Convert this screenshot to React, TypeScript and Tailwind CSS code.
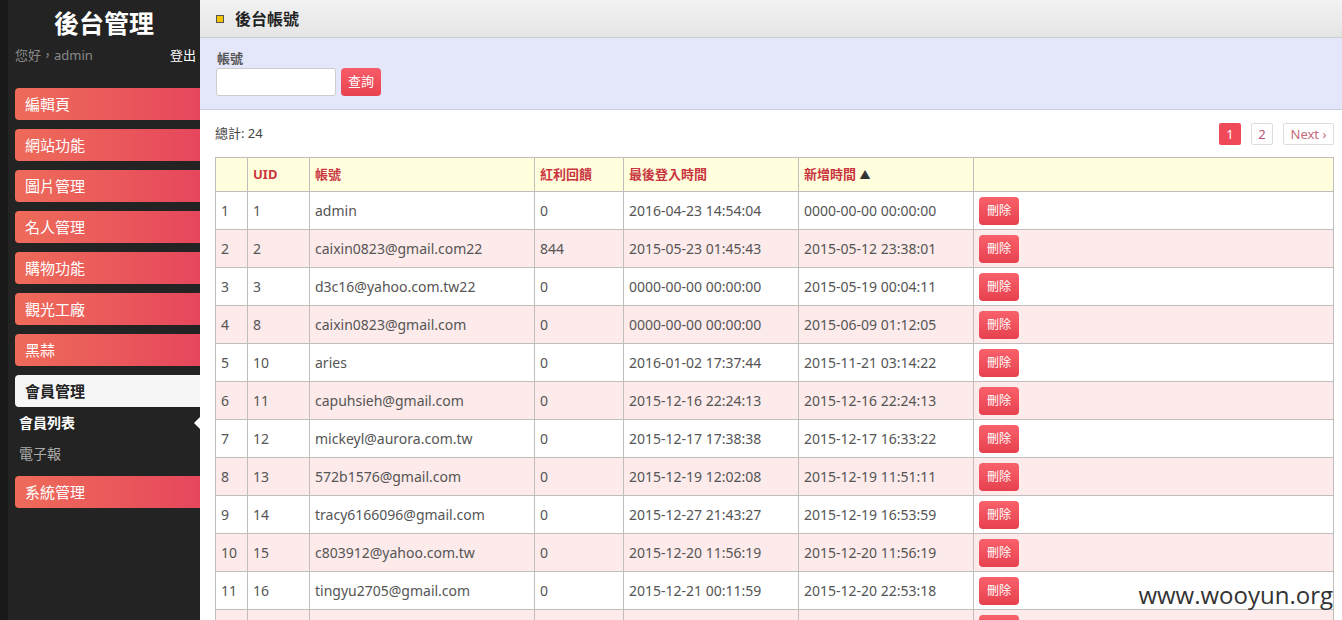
import React from "react";

const menu = ["編輯頁", "網站功能", "圖片管理", "名人管理", "購物功能", "觀光工廠", "黑蒜"];

const rows: string[][] = [
  ["1", "1", "admin", "0", "2016-04-23 14:54:04", "0000-00-00 00:00:00"],
  ["2", "2", "caixin0823@gmail.com22", "844", "2015-05-23 01:45:43", "2015-05-12 23:38:01"],
  ["3", "3", "d3c16@yahoo.com.tw22", "0", "0000-00-00 00:00:00", "2015-05-19 00:04:11"],
  ["4", "8", "caixin0823@gmail.com", "0", "0000-00-00 00:00:00", "2015-06-09 01:12:05"],
  ["5", "10", "aries", "0", "2016-01-02 17:37:44", "2015-11-21 03:14:22"],
  ["6", "11", "capuhsieh@gmail.com", "0", "2015-12-16 22:24:13", "2015-12-16 22:24:13"],
  ["7", "12", "mickeyl@aurora.com.tw", "0", "2015-12-17 17:38:38", "2015-12-17 16:33:22"],
  ["8", "13", "572b1576@gmail.com", "0", "2015-12-19 12:02:08", "2015-12-19 11:51:11"],
  ["9", "14", "tracy6166096@gmail.com", "0", "2015-12-27 21:43:27", "2015-12-19 16:53:59"],
  ["10", "15", "c803912@yahoo.com.tw", "0", "2015-12-20 11:56:19", "2015-12-20 11:56:19"],
  ["11", "16", "tingyu2705@gmail.com", "0", "2015-12-21 00:11:59", "2015-12-20 22:53:18"],
  ["", "", "", "", "", ""],
];

const font = { fontFamily: '"Noto Sans", "Noto Sans CJK TC", sans-serif' };

const MenuBtn: React.FC<{ label: string }> = ({ label }) => (
  <div className="h-8 ml-[7px] mb-[9px] rounded-l-[4px] bg-linear-to-r from-[#ee6b59] to-[#e6465c] text-white text-[15px] leading-8 pl-[10px]">
    {label}
  </div>
);

export default function App() {
  return (
    <div className="relative flex h-[620px] w-[1342px] overflow-hidden bg-white text-[#555]" style={font}>
      {/* sidebar */}
      <div className="w-[200px] shrink-0 h-full bg-[#232323] border-l-[8px] border-[#191919]">
        <div className="text-center text-white font-bold text-[25px] leading-[44px]" style={{ fontFamily: '"Noto Sans CJK TC", serif' }}>
          後台管理
        </div>
        <div className="flex justify-between items-center pl-[7px] pr-[4px] h-6 text-[13px]">
          <span className="text-[#8a8a8a]">您好，admin</span>
          <span className="text-white">登出</span>
        </div>
        <div className="mt-[20px]">
          {menu.map((m) => (
            <MenuBtn key={m} label={m} />
          ))}
          <div className="h-8 ml-[7px] rounded-l-[4px] bg-[#f6f6f6] text-[#222] font-bold text-[15px] leading-8 pl-[10px]">
            會員管理
          </div>
          <div className="relative pl-[11px] h-[32px] text-white font-bold text-[14px] leading-[32px]">
            會員列表
            <span className="absolute right-0 top-[10px] w-0 h-0 border-y-[6px] border-y-transparent border-r-[6px] border-r-white" />
          </div>
          <div className="pl-[11px] h-[30px] text-[#aaa] text-[14px] leading-[30px]">電子報</div>
          <div className="mt-[7px]">
            <MenuBtn label="系統管理" />
          </div>
        </div>
      </div>

      {/* main */}
      <div className="flex-1 flex flex-col min-w-0">
        <div className="h-[38px] shrink-0 flex items-center bg-linear-to-b from-[#f2f2f2] to-[#e5e5e5] border-b border-[#cfcfcf] pl-4">
          <span className="w-2 h-2 bg-[#f3c300] border border-[#555]" />
          <span className="ml-[11px] text-[16px] font-bold text-[#222]">後台帳號</span>
        </div>
        <div className="h-[72px] shrink-0 bg-[#e4e7fa] border-b border-[#c9cce0] pl-4 pt-[10px]">
          <div className="text-[13px] font-bold text-[#555] leading-5 ml-[1px]">帳號</div>
          <div className="flex items-center gap-[5px]">
            <div className="w-[120px] h-[28px] bg-white border border-[#ccc] rounded-[3px]" />
            <button className="w-[40px] h-[28px] rounded-[4px] bg-linear-to-b from-[#f65d68] to-[#e9404f] text-white text-[13px]">
              查詢
            </button>
          </div>
        </div>

        <div className="pl-[15px] pr-[8px]">
          <div className="flex justify-between items-center h-[47px]">
            <span className="text-[13px] text-[#444]">總計: 24</span>
            <div className="flex gap-[10px] text-[13px]">
              <span className="w-[22px] h-[22px] leading-[22px] text-center rounded-[2px] bg-[#f04a5a] text-white">1</span>
              <span className="w-[22px] h-[22px] leading-[20px] text-center rounded-[2px] border border-[#ddd] text-[#b57]">2</span>
              <span className="w-[51px] h-[22px] leading-[20px] text-center rounded-[2px] border border-[#ddd] text-[#c46a7a]">Next ›</span>
            </div>
          </div>

          <table className="w-full border-collapse text-[14px]">
            <thead>
              <tr className="h-[34px] bg-[#fffedd] text-[#c9353e] font-bold text-[13px] text-left">
                <th className="w-[32px] border border-[#c2bdbd]" />
                <th className="w-[62px] border border-[#c2bdbd] px-[5px]">UID</th>
                <th className="w-[225px] border border-[#c2bdbd] px-[5px]">帳號</th>
                <th className="w-[89px] border border-[#c2bdbd] px-[5px]">紅利回饋</th>
                <th className="w-[175px] border border-[#c2bdbd] px-[5px]">最後登入時間</th>
                <th className="w-[175px] border border-[#c2bdbd] px-[5px]">
                  新增時間 <span className="text-[#333] text-[11px]">▲</span>
                </th>
                <th className="border border-[#c2bdbd]" />
              </tr>
            </thead>
            <tbody>
              {rows.map((r, i) => (
                <tr key={i} className={"h-[38px] " + (i % 2 === 1 ? "bg-[#fdeaea]" : "bg-white")}>
                  {r.map((c, j) => (
                    <td key={j} className="border border-[#c2bdbd] px-[5px] text-[#555]">
                      {c}
                    </td>
                  ))}
                  <td className="border border-[#c2bdbd] px-[5px]">
                    {r[0] !== "" ? (
                      <button className="w-[40px] h-[28px] mt-[1px] rounded-[4px] bg-linear-to-b from-[#f8616b] to-[#e7404f] text-white text-[12px]">
                        刪除
                      </button>
                    ) : (
                      <div className="w-[40px] h-[28px] mt-[1px] rounded-[4px] bg-linear-to-b from-[#f8616b] to-[#e7404f]" />
                    )}
                  </td>
                </tr>
              ))}
            </tbody>
          </table>
        </div>
      </div>

      <div className="absolute right-[9px] bottom-[13px] text-[24px] text-[#333] leading-none" style={{ fontFamily: '"Open Sans", sans-serif' }}>
        www.wooyun.org
      </div>
    </div>
  );
}
